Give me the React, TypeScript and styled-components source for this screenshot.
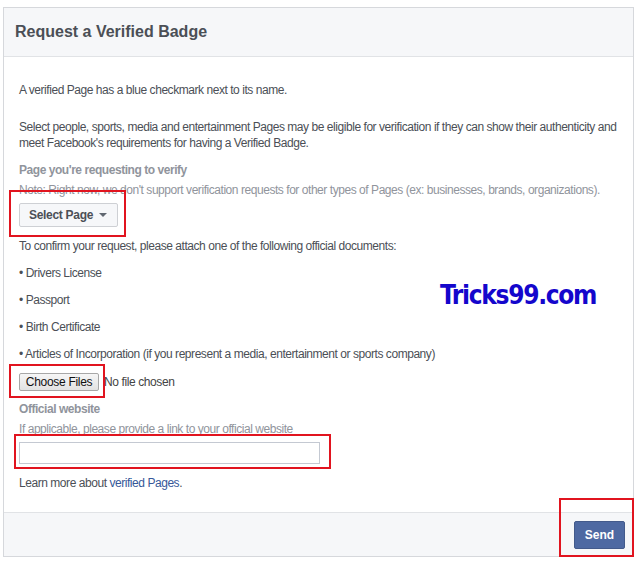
import React from 'react'
import styled, { createGlobalStyle } from 'styled-components'

const GlobalStyle = createGlobalStyle`
    body {
        margin: 0;
        background: #ffffff;
        font-family: "Liberation Sans", Arial, Helvetica, sans-serif;
    }
`

const Panel = styled.div`
    display: flex;
    flex-direction: column;
    box-sizing: border-box;
    width: 631px;
    height: 550px;
    margin: 7px 0 0 3px;
    border: 1px solid #d6d8dc;
    background: #ffffff;
`

const Header = styled.div`
    display: flex;
    align-items: center;
    height: 48px;
    padding: 0 11px;
    background: #f6f7f9;
    border-bottom: 1px solid #e1e3e6;
`

const Title = styled.h2`
    margin: 0;
    font-size: 16px;
    font-weight: bold;
    color: #4b4f56;
`

const Body = styled.div`
    position: relative;
    display: flex;
    flex-direction: column;
    align-items: flex-start;
    flex: 1;
    padding: 25px 10px 0 15px;
`

const Text = styled.p<{ $mt?: number; $muted?: boolean; $bold?: boolean }>`
    margin: ${(p) => p.$mt ?? 0}px 0 0;
    font-size: 12px;
    line-height: 16px;
    letter-spacing: -0.45px;
    font-weight: ${(p) => (p.$bold ? 'bold' : 'normal')};
    color: ${(p) => (p.$muted ? '#90949c' : '#4b4f56')};
`

const Link = styled.a`
    color: #365899;
    text-decoration: none;
`

const Marked = styled.div<{ $mt?: number; $t: number; $r: number; $b: number; $l: number }>`
    position: relative;
    display: flex;
    align-items: center;
    margin-top: ${(p) => p.$mt ?? 0}px;

    &::after {
        content: '';
        position: absolute;
        top: -${(p) => p.$t}px;
        right: -${(p) => p.$r}px;
        bottom: -${(p) => p.$b}px;
        left: -${(p) => p.$l}px;
        border: 2px solid #e1141f;
        pointer-events: none;
    }
`

const SelectButton = styled.button`
    display: flex;
    align-items: center;
    box-sizing: border-box;
    width: 99px;
    height: 24px;
    padding: 0 0 0 9px;
    background: #f6f7f9;
    border: 1px solid #ced0d4;
    border-radius: 2px;
    font-family: inherit;
    font-size: 12px;
    font-weight: bold;
    letter-spacing: -0.3px;
    color: #4b4f56;
`

const Caret = styled.span`
    width: 0;
    height: 0;
    margin-left: 6px;
    border-left: 4px solid transparent;
    border-right: 4px solid transparent;
    border-top: 4px solid #606770;
`

const FileRow = styled.div<{ $mt?: number }>`
    display: flex;
    align-items: center;
    margin-top: ${(p) => p.$mt ?? 0}px;
`

const FileButton = styled.button`
    box-sizing: border-box;
    width: 80px;
    height: 18px;
    padding: 0;
    background: linear-gradient(#f6f6f6, #e2e2e2);
    border: 1px solid #a7a7a7;
    border-radius: 2px;
    font-family: inherit;
    font-size: 12px;
    letter-spacing: -0.3px;
    color: #111111;
`

const FileStatus = styled.span`
    margin-left: 5px;
    font-size: 12px;
    line-height: 16px;
    letter-spacing: -0.4px;
    color: #444444;
`

const UrlInput = styled.input`
    box-sizing: border-box;
    width: 301px;
    height: 22px;
    margin: 0;
    border: 1px solid #c4c9d2;
    outline: none;
`

const Watermark = styled.div`
    position: absolute;
    top: 226px;
    left: 436px;
    font-family: "DejaVu Sans", Verdana, sans-serif;
    font-stretch: condensed;
    font-size: 26px;
    line-height: 24px;
    font-weight: bold;
    letter-spacing: -1.3px;
    color: #1406cc;
`

const Footer = styled.div`
    display: flex;
    justify-content: flex-end;
    align-items: flex-start;
    height: 35px;
    padding: 8px 8px 0 0;
    background: #f6f7f9;
    border-top: 1px solid #e1e3e6;
`

const SendButton = styled.button`
    box-sizing: border-box;
    width: 51px;
    height: 28px;
    padding: 0;
    background: #4e69a2;
    border: 1px solid #435a8b;
    border-radius: 2px;
    font-family: inherit;
    font-size: 12px;
    font-weight: bold;
    color: #ffffff;
`

const documents = [
    'Drivers License',
    'Passport',
    'Birth Certificate',
    'Articles of Incorporation (if you represent a media, entertainment or sports company)',
]

const App = () => {
    return (
        <>
            <GlobalStyle />
            <Panel>
                <Header>
                    <Title>Request a Verified Badge</Title>
                </Header>
                <Body>
                    <Text>A verified Page has a blue checkmark next to its name.</Text>
                    <Text $mt={21}>
                        Select people, sports, media and entertainment Pages may be eligible for
                        verification if they can show their authenticity and meet Facebook's
                        requirements for having a Verified Badge.
                    </Text>
                    <Text $mt={11} $muted $bold>
                        Page you're requesting to verify
                    </Text>
                    <Text $mt={4} $muted>
                        Note: Right now, we don't support verification requests for other types of
                        Pages (ex: businesses, brands, organizations).
                    </Text>
                    <Marked $mt={5} $t={13} $r={8} $b={10} $l={10}>
                        <SelectButton>
                            Select Page
                            <Caret />
                        </SelectButton>
                    </Marked>
                    <Text $mt={11}>
                        To confirm your request, please attach one of the following official
                        documents:
                    </Text>
                    {documents.map((doc) => (
                        <Text key={doc} $mt={11}>
                            • {doc}
                        </Text>
                    ))}
                    <FileRow $mt={11}>
                        <Marked $t={9} $r={6} $b={7} $l={10}>
                            <FileButton>Choose Files</FileButton>
                        </Marked>
                        <FileStatus>No file chosen</FileStatus>
                    </FileRow>
                    <Text $mt={10} $muted $bold>
                        Official website
                    </Text>
                    <Text $mt={4} $muted>
                        If applicable, please provide a link to your official website
                    </Text>
                    <Marked $mt={5} $t={8} $r={11} $b={5} $l={5}>
                        <UrlInput type="text" />
                    </Marked>
                    <Text $mt={11}>
                        Learn more about <Link href="#">verified Pages</Link>.
                    </Text>
                    <Watermark>Tricks99.com</Watermark>
                </Body>
                <Footer>
                    <Marked $t={23} $r={9} $b={8} $l={15}>
                        <SendButton>Send</SendButton>
                    </Marked>
                </Footer>
            </Panel>
        </>
    )
}

export default App
